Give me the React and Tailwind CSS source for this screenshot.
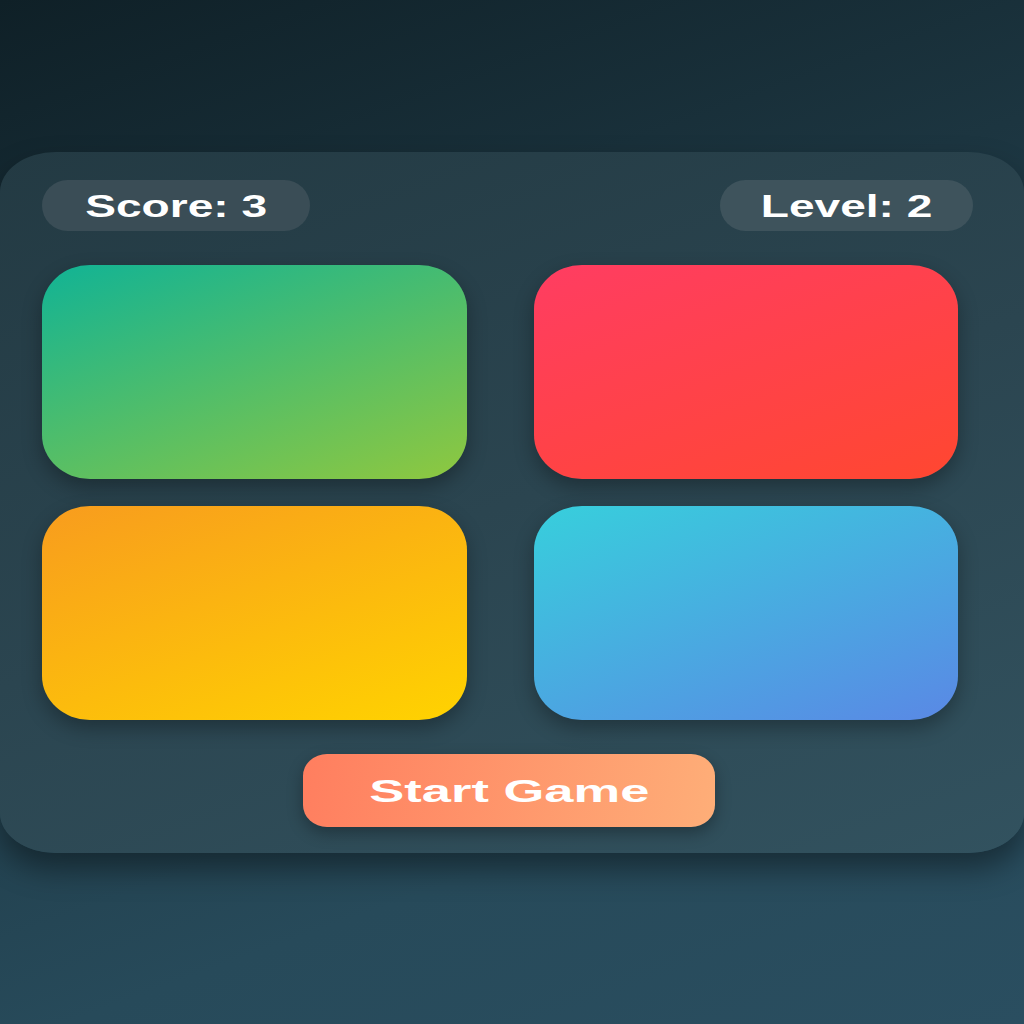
export default function App() {
  const font = { fontFamily: '"Liberation Sans", Arial, sans-serif' };
  return (
    <div
      className="w-[1024px] h-[1024px] overflow-hidden bg-[linear-gradient(160deg,#0f2027_0%,#1c3540_35%,#274a5a_75%,#2a4e60_100%)] flex flex-col"
      style={font}
    >
      <div className="mt-[152px] h-[701px] w-[1024px] rounded-[56px/40px] bg-[linear-gradient(160deg,#233a43_0%,#2b4550_50%,#32525f_100%)] shadow-[0_16px_30px_rgba(0,0,0,0.4)] pt-[28px] pl-[42px] pr-[51px] flex flex-col">
        <div className="flex justify-between h-[51px]">
          <div className="w-[268px] h-[51px] rounded-full bg-[#3a4d56] flex items-center justify-center">
            <span className="inline-block text-white font-bold text-[32px] leading-none scale-x-[1.44]">Score: 3</span>
          </div>
          <div className="w-[253px] h-[51px] rounded-full bg-[#3e535c] flex items-center justify-center">
            <span className="inline-block text-white font-bold text-[32px] leading-none scale-x-[1.44]">Level: 2</span>
          </div>
        </div>
        <div className="mt-[34px] w-[916px] grid grid-cols-2 gap-x-[67px] gap-y-[27px]">
          <div className="h-[214px] rounded-[48px/44px] bg-[linear-gradient(160deg,#11b395_0%,#8fc83f_100%)] shadow-[0_8px_20px_rgba(0,0,0,0.3)]" />
          <div className="h-[214px] rounded-[48px/44px] bg-[linear-gradient(160deg,#ff3d62_0%,#ff4730_100%)] shadow-[0_8px_20px_rgba(0,0,0,0.3)]" />
          <div className="h-[214px] rounded-[48px/44px] bg-[linear-gradient(160deg,#f89c1e_0%,#ffd300_100%)] shadow-[0_8px_20px_rgba(0,0,0,0.3)]" />
          <div className="h-[214px] rounded-[48px/44px] bg-[linear-gradient(160deg,#37cfdc_0%,#5a88e5_100%)] shadow-[0_8px_20px_rgba(0,0,0,0.3)]" />
        </div>
        <div className="mt-[34px] w-[916px] flex justify-center">
          <div className="ml-[18px] w-[412px] h-[73px] rounded-[24px/22px] bg-[linear-gradient(100deg,#ff7e5f_0%,#feae78_100%)] shadow-[0_6px_16px_rgba(0,0,0,0.3)] flex items-center justify-center">
            <span className="inline-block text-white font-bold text-[32px] leading-none scale-x-[1.64]">Start Game</span>
          </div>
        </div>
      </div>
    </div>
  );
}
